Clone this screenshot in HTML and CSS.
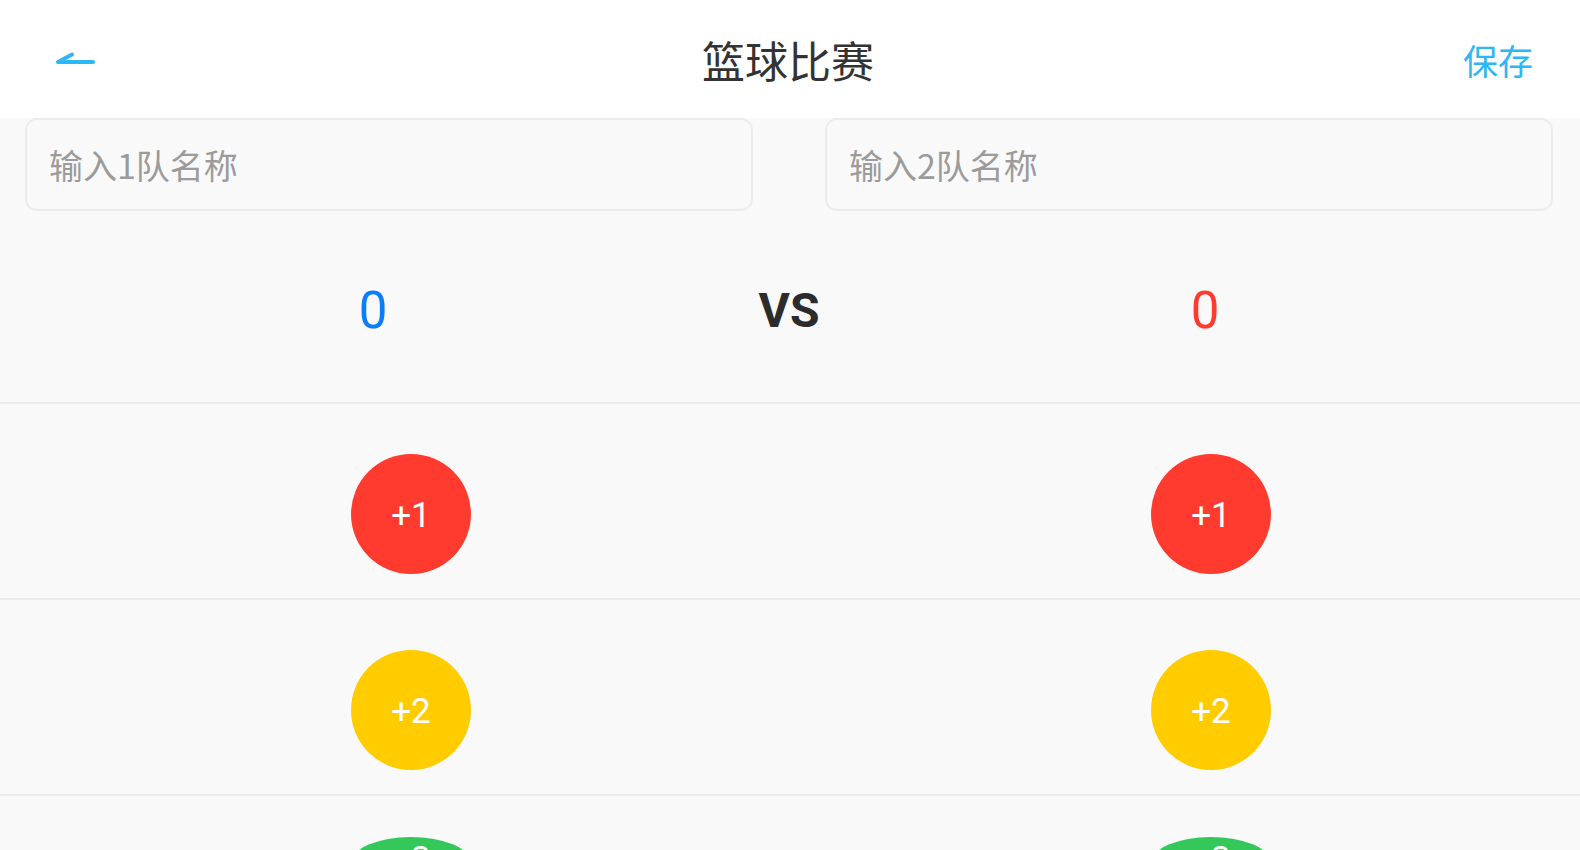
FILE: index.html
```html
<!DOCTYPE html>
<html lang="zh-CN">
<head>
<meta charset="utf-8">
<title>篮球比赛</title>
<link rel="stylesheet" href="styles.css">
</head>
<body>
<header class="topbar">
  <div class="back">
    <svg class="back-icon" width="44" height="16" viewBox="0 0 44 16" fill="none" stroke="#2db7f5" stroke-width="4" stroke-linecap="round" stroke-linejoin="round">
      <path d="M4 11 L39 11 M4 11 L18 3.5"/>
    </svg>
  </div>
  <h1 class="title">篮球比赛</h1>
  <div class="save">保存</div>
</header>
<main class="content">
  <section class="names">
    <input class="name-input" type="text" placeholder="输入1队名称">
    <input class="name-input" type="text" placeholder="输入2队名称">
  </section>
  <section class="scores">
    <div class="score score-a">0</div>
    <div class="vs">VS</div>
    <div class="score score-b">0</div>
  </section>
  <section class="row">
    <div class="btn btn-red">+1</div>
    <div class="btn btn-red">+1</div>
  </section>
  <section class="row">
    <div class="btn btn-yellow">+2</div>
    <div class="btn btn-yellow">+2</div>
  </section>
  <section class="row row-last">
    <div class="btn btn-green btn-squash">+3</div>
    <div class="btn btn-green btn-squash">+3</div>
  </section>
</main>
</body>
</html>
```

FILE: styles.css
```css
* { box-sizing: border-box; }
html, body {
  margin: 0;
  padding: 0;
  height: 100%;
  overflow: hidden;
}
body {
  background: #f9f9f9;
  font-family: Roboto, "Noto Sans CJK SC", sans-serif;
}
.topbar {
  height: 118px;
  background: #ffffff;
  display: grid;
  grid-template-columns: 1fr auto 1fr;
  align-items: center;
  padding: 0 47px 0 43px;
}
.back {
  display: flex;
  align-items: center;
  padding-left: 11px;
}
.back-icon { display: block; }
.title {
  margin: 0;
  font-family: "Noto Sans CJK SC", sans-serif;
  font-weight: 400;
  font-size: 43px;
  line-height: 1;
  color: #333333;
}
.save {
  justify-self: end;
  font-family: "Noto Sans CJK SC", sans-serif;
  font-size: 35px;
  line-height: 1;
  color: #2db7f5;
}
.names {
  display: grid;
  grid-template-columns: 1fr 1fr;
  gap: 72px;
  padding: 0 27px 0 25px;
}
.name-input {
  height: 93px;
  width: 100%;
  border: 2px solid #ececec;
  border-radius: 12px;
  background: #f9f9f9;
  padding: 0 22px;
  font-family: "Noto Sans CJK SC", sans-serif;
  font-size: 34px;
  color: #333;
  outline: none;
}
.name-input::placeholder { color: #9b9b9b; }
.scores {
  display: grid;
  grid-template-columns: 1fr 1fr 1fr;
  align-items: center;
  justify-items: center;
  height: 193px;
  padding: 8px 167px 0 165px;
  border-bottom: 2px solid #ebebeb;
}
.score {
  font-family: Roboto, sans-serif;
  font-size: 51px;
  line-height: 1;
}
.score-a { color: #0a7cff; }
.score-b { color: #ff3b30; }
.vs {
  font-family: Roboto, sans-serif;
  font-weight: 700;
  font-size: 48px;
  line-height: 1;
  color: #2c2c2c;
}
.row {
  display: flex;
  gap: 680px;
  padding: 50px 0 24px 351px;
  border-bottom: 2px solid #ebebeb;
}
.row-last {
  padding-top: 41px;
  border-bottom: none;
}
.btn {
  width: 120px;
  height: 120px;
  border-radius: 50%;
  display: flex;
  align-items: center;
  justify-content: center;
  color: #ffffff;
  font-family: Roboto, sans-serif;
  font-size: 35px;
  line-height: 1;
  padding-top: 2px;
}
.btn-red { background: #ff3b30; }
.btn-yellow { background: #ffcc00; }
.btn-green { background: #34c759; }
.btn-squash {
  border-radius: 60px / 26px;
  align-items: flex-start;
  padding-top: 5px;
}
```
